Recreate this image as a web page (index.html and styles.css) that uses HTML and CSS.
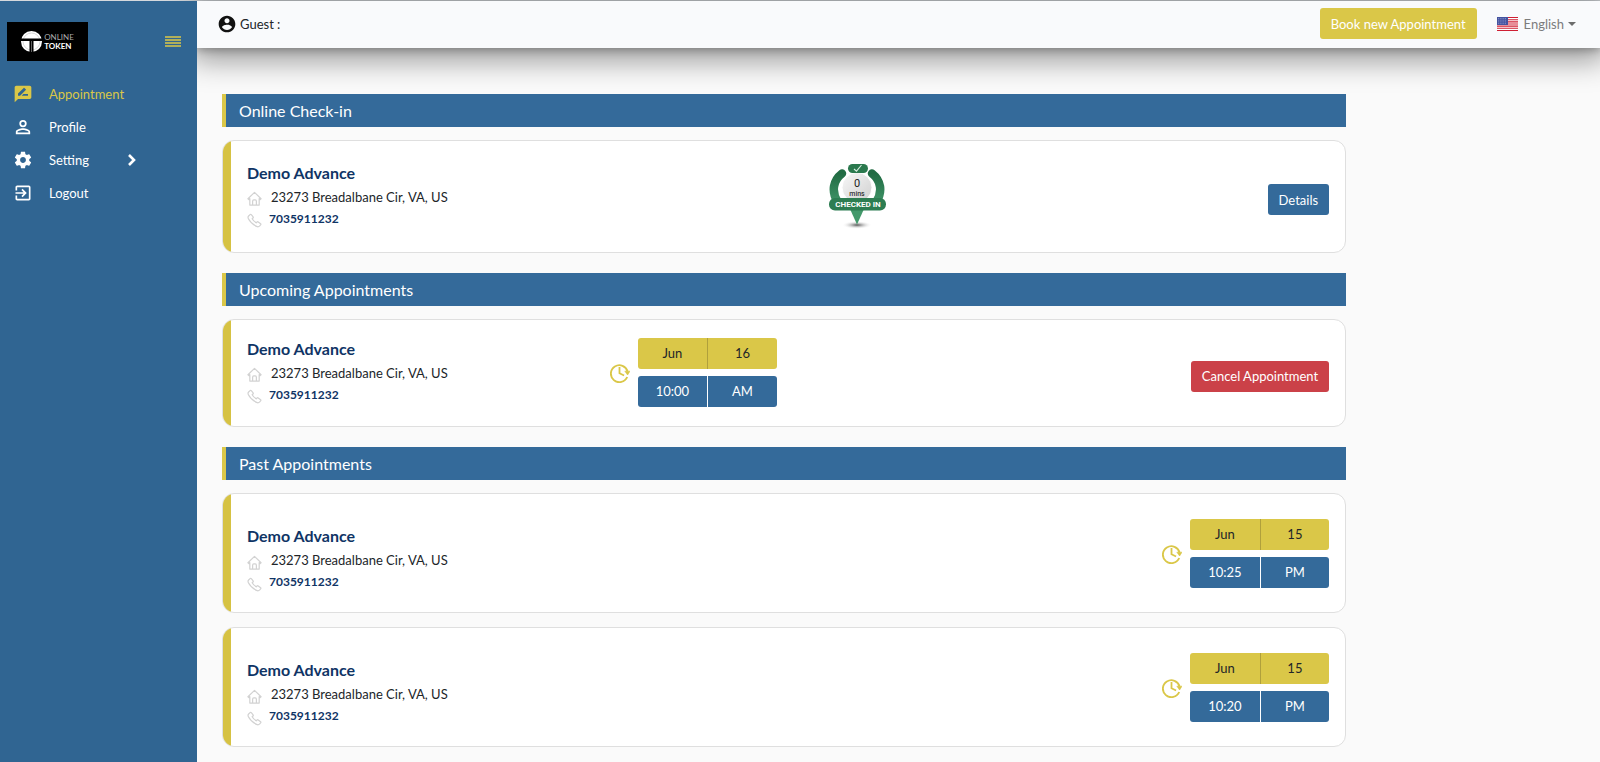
FILE: index.html
```html
<!DOCTYPE html>
<html lang="en">

<head>
    <meta charset="utf-8">
    <title>Online Token - Appointments</title>
    <link rel="stylesheet" href="styles.css">
</head>

<body>
    <!-- shared icons -->
    <svg class="sprite" aria-hidden="true">
        <symbol id="house" viewBox="0 0 16 16">
            <path d="M1 8.2 8 1.5l7 6.7-1 .9-1-.9V15H3V8.2l-1 .9zM6 15v-4.200q0-1.300 1.200-1.300h1.600q1.200 0 1.200 1.300V15" fill="none" stroke="#d2d2d2" stroke-width="1.300" stroke-linejoin="round"/>
        </symbol>
        <symbol id="phone" viewBox="0 0 16 16">
            <path d="M1.700 3.200 3.300 1.700q.7-.5 1.300.1l1.900 2.300q.5.700-.1 1.300l-.9.800q1.600 2.700 4.300 4.300l.9-.9q.6-.6 1.300-.1l2.500 1.900q.6.600 0 1.300l-1.200 1.300q-1.200 1.200-3.100.3C5.900 12.200 3.200 9.600 1.500 6.200q-.9-1.900.2-3z" fill="none" stroke="#d2d2d2" stroke-width="1.300" stroke-linejoin="round"/>
        </symbol>
        <symbol id="clock" viewBox="0 0 20 20">
            <path d="M17.200 14A8.500 8.500 0 1 1 17.600 8.500" fill="none" stroke="#dac748" stroke-width="1.900"/>
            <path d="M9.500 4v6.200l4.600 2.300" fill="none" stroke="#dac748" stroke-width="1.800"/>
            <path d="M14.800 8.200H20l-2.400 3.800z" fill="#dac748" stroke="#dac748" stroke-width=".6"/>
        </symbol>
    </svg>

    <div class="layout">
        <aside class="sidebar">
            <div class="brand">
                <a href="#" class="logo" aria-label="Online Token">
                    <svg width="21" height="21" viewBox="0 0 21 21">
                        <circle cx="10.500" cy="10.500" r="10.500" fill="#fff"/>
                        <circle cx="10.500" cy="10.500" r="8.500" fill="none" stroke="#ccc" stroke-width=".8"/>
                        <path d="M0 7.500h21v2.500h-8.500v11h-4V10H0z" fill="#000"/>
                        <path d="M10.500 10v11" stroke="#777" stroke-width=".8"/>
                    </svg>
                    <span class="logo-text"><span>ONLINE</span><b>TOKEN</b></span>
                </a>
                <button class="toggle" aria-label="Toggle menu">
                    <svg width="16" height="12" viewBox="0 0 16 12"><path d="M0 1h16M0 4h16M0 7h16M0 10h16" stroke="#dac748" stroke-width="1.500"/></svg>
                </button>
            </div>
            <nav class="menu">
                <a href="#" class="active">
                    <svg width="20" height="20" viewBox="0 0 24 24"><path fill="currentColor" fill-rule="evenodd" d="M20 2H4c-1.100 0-2 .9-2 2v18l4-4h14c1.100 0 2-.9 2-2V4c0-1.100-.9-2-2-2zM6 14v-2.470l6.880-6.880c.2-.2.510-.2.710 0l1.770 1.770c.2.200.2.510 0 .710L8.470 14H6zm12 0h-7.500l2-2H18v2z"/></svg>
                    Appointment
                </a>
                <a href="#">
                    <svg width="20" height="20" viewBox="0 0 24 24"><path fill="currentColor" fill-rule="evenodd" d="M12 3.500a4.400 4.400 0 1 0 0 8.800 4.400 4.400 0 0 0 0-8.800zm0 2.100a2.300 2.300 0 1 1 0 4.600 2.300 2.300 0 0 1 0-4.600zM12 13.500c-3 0-8.600 1.500-8.600 4.300v3h17.200v-3c0-2.800-5.600-4.300-8.600-4.300zm6.500 5.200h-13v-.9c0-.7 3.200-2.200 6.500-2.200s6.500 1.500 6.500 2.200v.9z"/></svg>
                    Profile
                </a>
                <a href="#">
                    <svg width="20" height="20" viewBox="0 0 24 24"><path fill="currentColor" d="M19.430 12.980c.04-.32.070-.64.070-.98s-.03-.66-.07-.98l2.110-1.650c.19-.15.240-.42.120-.64l-2-3.460c-.12-.22-.39-.3-.61-.22l-2.490 1c-.52-.4-1.080-.73-1.690-.98l-.38-2.650C14.460 2.180 14.250 2 14 2h-4c-.25 0-.46.180-.49.420l-.38 2.650c-.61.250-1.170.590-1.690.980l-2.490-1c-.23-.09-.49 0-.61.220l-2 3.460c-.13.220-.07.490.12.640l2.110 1.650c-.04.320-.07.650-.07.980s.03.660.07.980l-2.110 1.650c-.19.150-.24.420-.12.640l2 3.460c.12.220.39.300.61.220l2.490-1c.52.400 1.080.730 1.690.980l.38 2.650c.03.240.24.420.49.420h4c.25 0 .46-.18.490-.42l.38-2.650c.61-.25 1.170-.59 1.690-.98l2.490 1c.23.090.49 0 .61-.22l2-3.460c.12-.22.070-.49-.12-.64l-2.110-1.650zM12 15.500c-1.930 0-3.500-1.570-3.500-3.500s1.570-3.500 3.500-3.500 3.500 1.570 3.500 3.500-1.570 3.500-3.500 3.500z"/></svg>
                    Setting
                    <svg class="arrow" width="10" height="14" viewBox="0 0 10 14"><path d="M2 2l5 5-5 5" fill="none" stroke="#fff" stroke-width="2.600"/></svg>
                </a>
                <a href="#">
                    <svg width="20" height="20" viewBox="0 0 24 24"><path fill="currentColor" d="M10.090 15.590L11.500 17l5-5-5-5-1.410 1.410L12.670 11H3v2h9.670l-2.580 2.590zM19 3H5c-1.110 0-2 .9-2 2v4h2V5h14v14H5v-4H3v4c0 1.100.89 2 2 2h14c1.100 0 2-.9 2-2V5c0-1.100-.9-2-2-2z"/></svg>
                    Logout
                </a>
            </nav>
        </aside>

        <div class="page">
            <header class="topbar">
                <div class="guest">
                    <svg width="20" height="20" viewBox="0 0 24 24"><path fill="#111" d="M12 2C6.480 2 2 6.480 2 12s4.480 10 10 10 10-4.480 10-10S17.520 2 12 2zm0 3c1.660 0 3 1.340 3 3s-1.340 3-3 3-3-1.340-3-3 1.340-3 3-3zm0 14.200c-2.500 0-4.710-1.280-6-3.220.03-1.990 4-3.080 6-3.080 1.990 0 5.970 1.090 6 3.080-1.290 1.940-3.500 3.220-6 3.220z"/></svg>
                    Guest :
                </div>
                <button class="btn btn-gold">Book new Appointment</button>
                <button class="language">
                    <svg width="21" height="14" viewBox="0 0 21 14">
                        <path fill="#fff" d="M0 0h21v14H0z"/>
                        <path d="M0 .5h21M0 2.700h21M0 4.900h21M0 7h21M0 9.100h21M0 11.300h21M0 13.500h21" stroke="#cf1f33" stroke-width="1.100"/>
                        <path fill="#4453a0" d="M0 0h11v8H0z"/>
                        <path d="M1 1.500h9M1 3.200h9M1 4.900h9M1 6.600h9" stroke="#a9b0d8" stroke-width=".7" stroke-dasharray=".8 1"/>
                    </svg>
                    <span class="language-name">English<span class="caret"></span></span>
                </button>
            </header>

            <main class="content">
                <h2>Online Check-in</h2>
                <section class="card checkin">
                    <div class="card-body">
                        <div class="info">
                            <h3>Demo Advance</h3>
                            <p><svg><use href="#house"/></svg>23273 Breadalbane Cir, VA, US</p>
                            <a href="tel:7035911232"><svg><use href="#phone"/></svg>7035911232</a>
                        </div>
                        <svg class="badge" width="58" height="65" viewBox="0 0 58 65">
                            <defs>
                                <linearGradient id="green" x1="0" x2="0" y1="0" y2="1">
                                    <stop offset="0" stop-color="#216b43"/>
                                    <stop offset="1" stop-color="#3f9467"/>
                                </linearGradient>
                                <linearGradient id="dial" x1="0" x2="1" y1="0" y2="1">
                                    <stop offset="0" stop-color="#f8f8f8"/>
                                    <stop offset="1" stop-color="#cfcfcf"/>
                                </linearGradient>
                                <radialGradient id="shade">
                                    <stop offset="0" stop-color="#555"/>
                                    <stop offset="1" stop-color="#fff" stop-opacity="0"/>
                                </radialGradient>
                            </defs>
                            <ellipse cx="28" cy="61" rx="15" ry="4" fill="url(#shade)"/>
                            <path d="M21 45h14l-7 15.500z" fill="#43996b"/>
                            <path d="M13 9.500c-9 7-11 18-4 29M43 9.500c9 7 11 18 4 29" fill="none" stroke="url(#green)" stroke-width="8.500" stroke-linecap="round"/>
                            <circle cx="28" cy="23.500" r="15" fill="url(#dial)" stroke="#fff"/>
                            <rect x="19" y="0" width="20" height="9" rx="4.500" fill="#2b794e"/>
                            <path d="m25 5 2.500 2.200L32.500 1" fill="none" stroke="#d8eee1" stroke-width="1.100"/>
                            <text class="badge-count" x="28" y="23">0</text>
                            <text class="badge-unit" x="28" y="32">mins</text>
                            <rect x="0" y="34" width="57" height="12.500" rx="6" fill="#2d7d52"/>
                            <text class="badge-label" x="29" y="43">CHECKED IN</text>
                        </svg>
                        <button class="btn btn-blue">Details</button>
                    </div>
                </section>

                <h2>Upcoming Appointments</h2>
                <section class="card upcoming">
                    <div class="card-body">
                        <div class="info">
                            <h3>Demo Advance</h3>
                            <p><svg><use href="#house"/></svg>23273 Breadalbane Cir, VA, US</p>
                            <a href="tel:7035911232"><svg><use href="#phone"/></svg>7035911232</a>
                        </div>
                        <div class="when">
                            <svg class="clock"><use href="#clock"/></svg>
                            <div class="slots">
                                <div class="slot date"><span>Jun</span><span>16</span></div>
                                <div class="slot time"><span>10:00</span><span>AM</span></div>
                            </div>
                        </div>
                        <button class="btn btn-red">Cancel Appointment</button>
                    </div>
                </section>

                <h2>Past Appointments</h2>
                <section class="card past">
                    <div class="card-body">
                        <div class="info">
                            <h3>Demo Advance</h3>
                            <p><svg><use href="#house"/></svg>23273 Breadalbane Cir, VA, US</p>
                            <a href="tel:7035911232"><svg><use href="#phone"/></svg>7035911232</a>
                        </div>
                        <div class="when">
                            <svg class="clock"><use href="#clock"/></svg>
                            <div class="slots">
                                <div class="slot date"><span>Jun</span><span>15</span></div>
                                <div class="slot time"><span>10:25</span><span>PM</span></div>
                            </div>
                        </div>
                    </div>
                </section>
                <section class="card past">
                    <div class="card-body">
                        <div class="info">
                            <h3>Demo Advance</h3>
                            <p><svg><use href="#house"/></svg>23273 Breadalbane Cir, VA, US</p>
                            <a href="tel:7035911232"><svg><use href="#phone"/></svg>7035911232</a>
                        </div>
                        <div class="when">
                            <svg class="clock"><use href="#clock"/></svg>
                            <div class="slots">
                                <div class="slot date"><span>Jun</span><span>15</span></div>
                                <div class="slot time"><span>10:20</span><span>PM</span></div>
                            </div>
                        </div>
                    </div>
                </section>
            </main>
        </div>
    </div>
</body>

</html>
```
FILE: styles.css
```css
* {
    box-sizing: border-box;
}

body {
    margin: 0;
    font-family: Lato, "Liberation Sans", sans-serif;
    font-size: 13px;
    line-height: 20px;
    color: #212529;
    background-color: #fafafa;
}

h2, h3, p {
    margin: 0;
}

a {
    text-decoration: none;
}

button {
    font: inherit;
    cursor: pointer;
}

.sprite {
    display: none;
}

.layout {
    display: flex;
    min-height: 100vh;
    border-top: 1px solid #d5d9dd;
}

/* sidebar */
.sidebar {
    position: relative;
    z-index: 1;
    width: 197px;
    flex-shrink: 0;
    background-color: #306592;
}

.brand {
    display: flex;
    align-items: center;
    justify-content: space-between;
    padding: 21px 16px 16px 7px;
}

.logo {
    display: flex;
    align-items: center;
    justify-content: center;
    gap: 2px;
    width: 81px;
    height: 39px;
    background-color: #000;
    color: #fff;
}

.logo-text {
    display: flex;
    flex-direction: column;
    font-size: 8px;
    line-height: 9px;
}

.logo-text span {
    color: #aaa;
}

.toggle {
    display: flex;
    padding: 0;
    border: 0;
    background: none;
}

.menu a {
    display: flex;
    align-items: center;
    gap: 16px;
    height: 33px;
    padding-left: 13px;
    color: #fff;
}

.menu .active {
    color: #dac748;
}

.menu .arrow {
    margin-left: 22px;
}

/* top bar */
.page {
    flex: 1;
    min-width: 0;
}

.topbar {
    display: flex;
    align-items: center;
    height: 47px;
    padding: 0 24px 2px 20px;
    background-color: #f9fafc;
    box-shadow: 0 2px 8px rgba(0, 0, 0, 0.25), 0 6px 30px 6px rgba(0, 0, 0, 0.4);
}

.guest {
    display: flex;
    align-items: center;
    gap: 3px;
    margin-right: auto;
}

.language {
    display: flex;
    align-items: center;
    gap: 6px;
    margin-left: 20px;
    padding: 0;
    border: 0;
    background: none;
    color: #7c7c7c;
}

.language-name {
    display: flex;
    align-items: center;
    gap: 4px;
}

.caret {
    border: 4px solid transparent;
    border-top-color: #6c6c6c;
    border-bottom: 0;
}

.btn {
    height: 31px;
    padding: 0 11px;
    border: 0;
    border-radius: 3px;
    color: #fff;
}

.btn-gold {
    background-color: #dac748;
}

.btn-blue {
    background-color: #346a9a;
}

.btn-red {
    background-color: #cb4148;
}

/* appointments */
.content {
    width: 83.3333%;
    padding: 46px 20px 0 25px;
}

h2 {
    margin-bottom: 13px;
    padding-left: 13px;
    border-left: 4px solid #dac748;
    background-color: #346a9a;
    color: #fff;
    font-size: 16px;
    font-weight: 400;
    line-height: 33px;
}

.card {
    margin-bottom: 14px;
    border: 1px solid #dfdfdf;
    border-radius: 12px;
    background-color: #fff;
    overflow: hidden;
}

.card + h2 {
    margin-top: 20px;
}

.card-body {
    display: flex;
    align-items: center;
    justify-content: space-between;
    padding: 18px 16px;
    border-left: 8px solid #d6c243;
}

.checkin .card-body {
    padding-top: 19px;
    padding-bottom: 23px;
}

.checkin .btn {
    margin-top: 10px;
}

.badge {
    margin-top: 4px;
}

.upcoming .card-body {
    display: grid;
    grid-template-columns: repeat(3, 1fr);
    column-gap: 6px;
    padding-bottom: 19px;
}

.upcoming .info {
    margin-top: -4px;
}

.upcoming .btn {
    justify-self: end;
    margin-top: 7px;
}

.past .card-body {
    align-items: flex-start;
    padding-top: 25px;
    padding-bottom: 20px;
}

.past .info {
    padding-top: 5px;
}

.past .when {
    padding-bottom: 4px;
}

.info h3 {
    color: #0f3465;
    font-size: 16px;
    font-weight: 700;
    line-height: 24px;
}

.info p, .info a {
    display: flex;
    align-items: center;
}

.info p {
    gap: 9px;
    line-height: 24px;
}

.info a {
    gap: 7px;
    color: #0f3465;
    font-size: 12px;
    font-weight: 700;
}

.info svg {
    width: 15px;
    height: 15px;
    margin-top: 4px;
}

.badge text {
    font-family: Roboto, sans-serif;
    text-anchor: middle;
}

.badge .badge-count {
    font-size: 11px;
    fill: #222;
}

.badge .badge-unit {
    font-size: 7px;
    font-weight: 500;
    fill: #333;
}

.badge .badge-label {
    font-size: 8px;
    font-weight: 700;
    fill: #fff;
}

.when {
    display: flex;
    align-items: center;
    gap: 8px;
}

.clock {
    width: 20px;
    height: 20px;
}

.slots {
    display: grid;
    gap: 7px;
    width: 139px;
}

.slot {
    display: grid;
    grid-template-columns: 1fr 1fr;
    border-radius: 3px;
    line-height: 31px;
    text-align: center;
}

.slot span + span {
    border-left: 1px solid #b0a03c;
}

.date {
    background-color: #dac748;
}

.time {
    background-color: #346a9a;
    color: #fff;
}

.time span + span {
    border-left-color: #fff;
}
```
